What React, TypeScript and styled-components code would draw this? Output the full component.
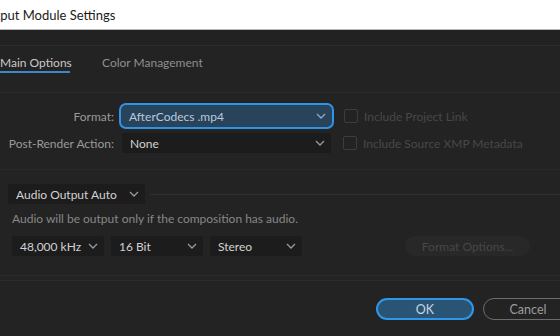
import React from "react";
import styled, { createGlobalStyle } from "styled-components";

const GlobalStyle = createGlobalStyle`
  html, body {
    margin: 0;
    padding: 0;
    background: #232323;
    overflow: hidden;
  }
  body {
    font-family: Lato, "Noto Sans", sans-serif;
  }
`;

const Window = styled.div`
  width: 560px;
  height: 336px;
  display: flex;
  flex-direction: column;
  background: #232323;
  overflow: hidden;
`;

const TitleBar = styled.div`
  height: 29px;
  flex-shrink: 0;
  background: #ffffff;
  border-bottom: 1px solid #b8b8b8;
  display: flex;
  align-items: center;
  overflow: hidden;
`;

const Title = styled.div`
  margin-left: -22px;
  font-size: 13px;
  color: #1a1a1a;
  white-space: nowrap;
`;

const TopStrip = styled.div`
  height: 15px;
  flex-shrink: 0;
  background: #222222;
  border-bottom: 1px solid #2c2c2c;
`;

const TabBar = styled.div`
  height: 47px;
  flex-shrink: 0;
  display: flex;
  gap: 32px;
  align-items: flex-start;
  padding-top: 9px;
  box-sizing: border-box;
  border-bottom: 1px solid #2b2b2b;
`;

const Tab = styled.div<{ $active?: boolean }>`
  font-size: 12px;
  line-height: 15px;
  padding-bottom: 1px;
  color: ${(p) => (p.$active ? "#c9c9c9" : "#8f8f8f")};
  border-bottom: 2px solid ${(p) => (p.$active ? "#3c86c9" : "transparent")};
  white-space: nowrap;
  width: ${(p) => (p.$active ? "70px" : "auto")};
`;

const Panel = styled.div`
  display: flex;
  flex-direction: column;
  padding-top: 12px;
`;

const FormRow = styled.div`
  display: flex;
  align-items: center;
  height: 22px;
  margin-bottom: 5px;
`;

const Label = styled.div`
  width: 114px;
  text-align: right;
  font-size: 12px;
  color: #9a9a9a;
  margin-right: 8px;
  white-space: nowrap;
`;

const Select = styled.div<{ $focused?: boolean; $width: number }>`
  width: ${(p) => p.$width}px;
  height: ${(p) => (p.$focused ? "22px" : "20px")};
  box-sizing: border-box;
  display: flex;
  align-items: center;
  justify-content: space-between;
  padding: 0 6px 0 8px;
  font-size: 12px;
  border-radius: ${(p) => (p.$focused ? "5px" : "2px")};
  background: ${(p) => (p.$focused ? "#28435a" : "#1c1c1c")};
  color: ${(p) => (p.$focused ? "#b8cadb" : "#d2d2d2")};
  box-shadow: ${(p) => (p.$focused ? "0 0 0 2px #2f93e6" : "none")};
  white-space: nowrap;
`;

const Chevron = ({ color = "#9a9a9a" }: { color?: string }) => (
  <svg width="10" height="6" viewBox="0 0 10 6">
    <path d="M1 1l4 4 4-4" fill="none" stroke={color} strokeWidth="1.3" />
  </svg>
);

const Check = styled.div`
  display: flex;
  align-items: center;
  margin-left: 12px;
  gap: 6px;
  font-size: 12px;
  color: #484848;
  white-space: nowrap;
`;

const Box = styled.div`
  width: 12px;
  height: 12px;
  border: 1px solid #3d3d3d;
  border-radius: 2px;
`;

const Divider = styled.div`
  height: 1px;
  background: #2a2a2a;
  margin-top: 10px;
`;

const AudioHeader = styled.div`
  display: flex;
  align-items: center;
  margin-top: 14px;
  padding-left: 8px;
`;

const HeaderLine = styled.div`
  flex: 1;
  height: 1px;
  background: #303030;
  margin-left: 5px;
`;

const Note = styled.div`
  font-size: 12px;
  color: #878787;
  margin: 7px 0 0 12px;
  white-space: nowrap;
`;

const AudioRow = styled.div`
  display: flex;
  align-items: center;
  gap: 7px;
  margin-top: 10px;
  padding-left: 12px;
`;

const DisabledButton = styled.div`
  margin-left: auto;
  margin-right: 30px;
  width: 125px;
  height: 20px;
  border-radius: 10px;
  background: #282828;
  color: #474747;
  font-size: 12px;
  display: flex;
  align-items: center;
  justify-content: center;
`;

const BottomLines = styled.div`
  margin-top: 19px;
  height: 4px;
  border-top: 1px solid #2c2c2c;
  border-bottom: 1px solid #2c2c2c;
`;

const Footer = styled.div`
  display: flex;
  gap: 9px;
  padding-left: 376px;
  margin-top: 17px;
`;

const Button = styled.div<{ $primary?: boolean }>`
  width: ${(p) => (p.$primary ? "98px" : "90px")};
  height: 22px;
  flex-shrink: 0;
  box-sizing: border-box;
  border-radius: 11px;
  display: flex;
  align-items: center;
  justify-content: center;
  font-size: 12.5px;
  background: ${(p) => (p.$primary ? "#2a5474" : "transparent")};
  border: ${(p) => (p.$primary ? "2px solid #2f97ea" : "1px solid #6c6c6c")};
  color: ${(p) => (p.$primary ? "#c6d6e4" : "#9c9c9c")};
`;

const App = () => (
  <Window>
    <GlobalStyle />
    <TitleBar>
      <Title>Output Module Settings</Title>
    </TitleBar>
    <TopStrip />
    <TabBar>
      <Tab $active>Main Options</Tab>
      <Tab>Color Management</Tab>
    </TabBar>
    <Panel>
      <FormRow>
        <Label>Format:</Label>
        <Select $focused $width={211} style={{ marginLeft: -1 }}>
          AfterCodecs .mp4
          <Chevron color="#8fa9c0" />
        </Select>
        <Check>
          <Box />
          Include Project Link
        </Check>
      </FormRow>
      <FormRow>
        <Label>Post-Render Action:</Label>
        <Select $width={209}>
          None
          <Chevron />
        </Select>
        <Check>
          <Box />
          Include Source XMP Metadata
        </Check>
      </FormRow>
      <Divider />
      <AudioHeader>
        <Select $width={137}>
          Audio Output Auto
          <Chevron />
        </Select>
        <HeaderLine />
      </AudioHeader>
      <Note>Audio will be output only if the composition has audio.</Note>
      <AudioRow>
        <Select $width={92}>
          48,000 kHz
          <Chevron />
        </Select>
        <Select $width={92}>
          16 Bit
          <Chevron />
        </Select>
        <Select $width={92}>
          Stereo
          <Chevron />
        </Select>
        <DisabledButton>Format Options...</DisabledButton>
      </AudioRow>
      <BottomLines />
      <Footer>
        <Button $primary>OK</Button>
        <Button>Cancel</Button>
      </Footer>
    </Panel>
  </Window>
);

export default App;
